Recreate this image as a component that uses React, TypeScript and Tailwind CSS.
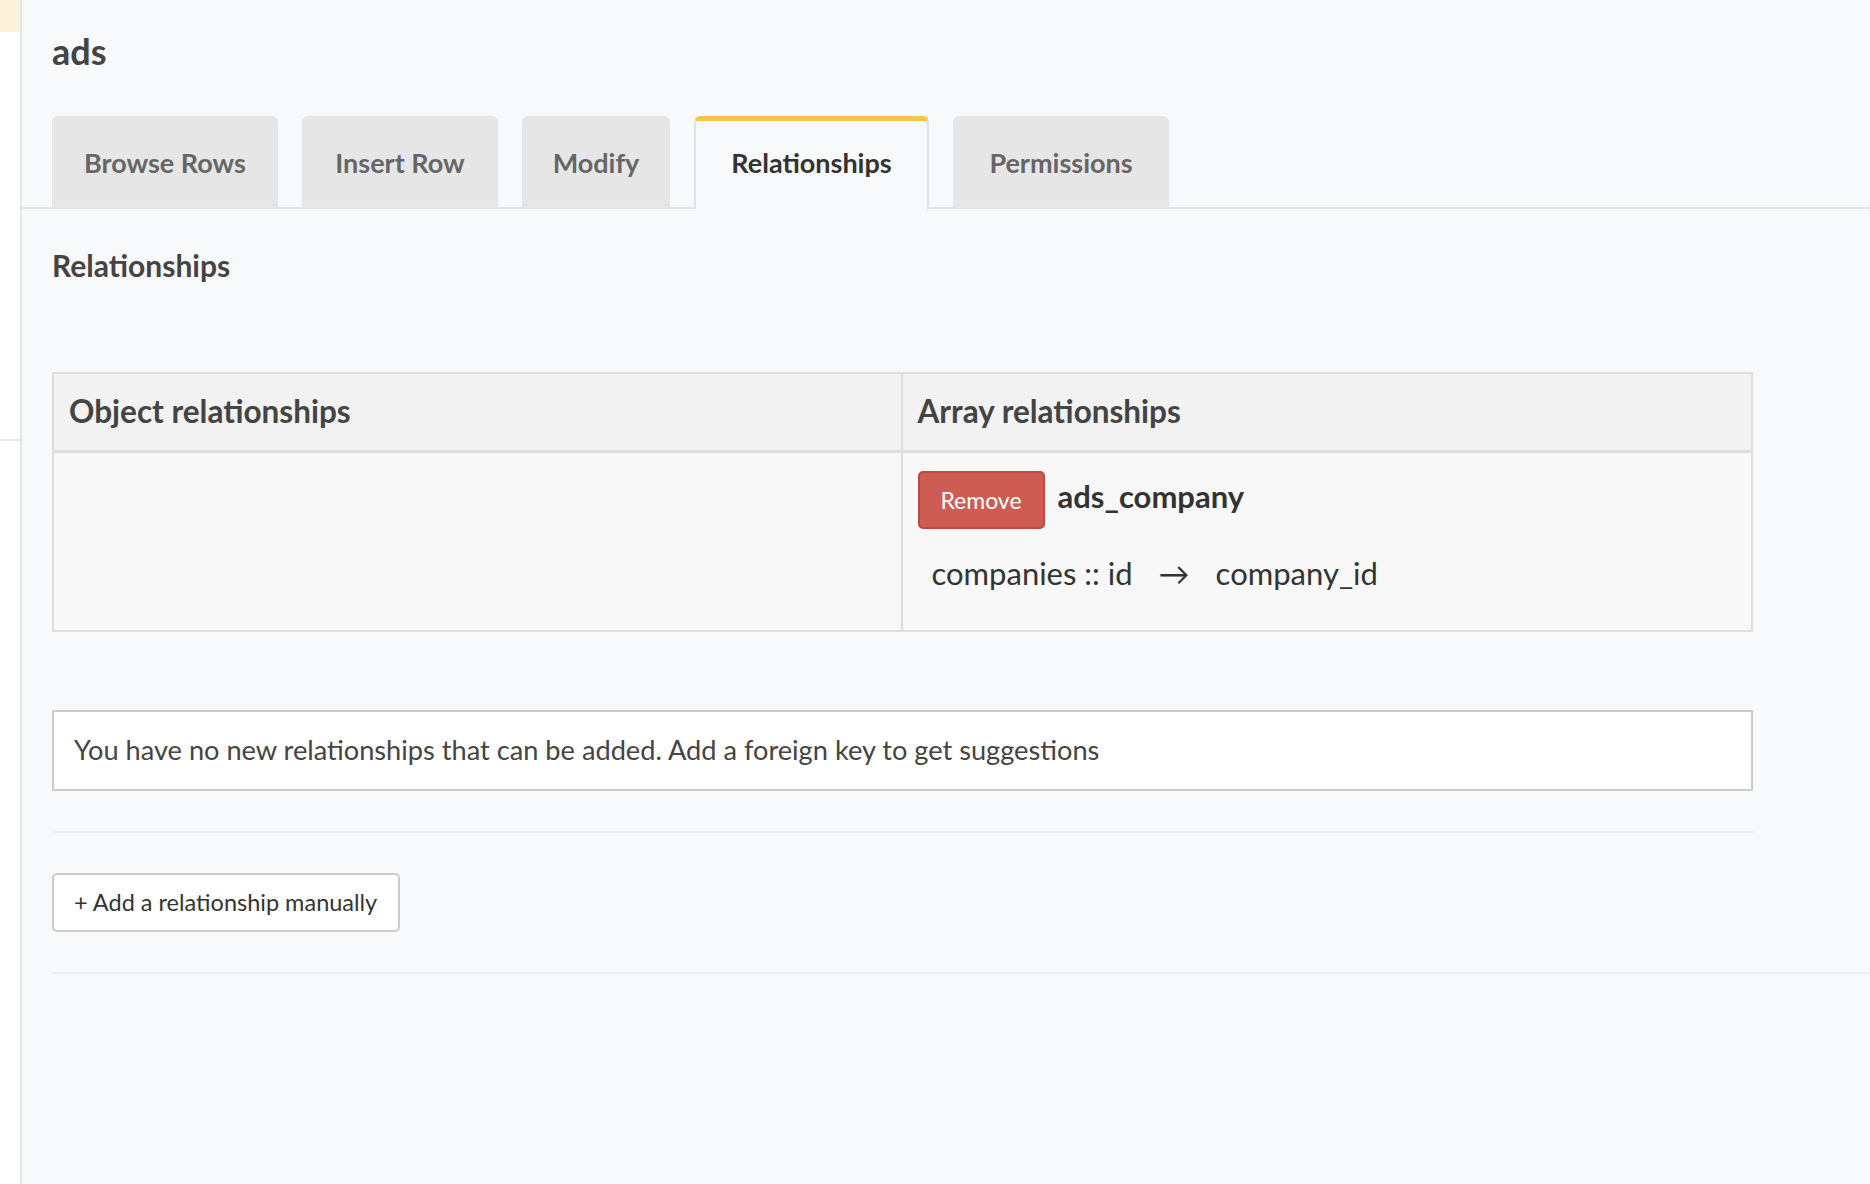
import React from "react";

const tabs = [
  { label: "Browse Rows", width: "w-[226px]" },
  { label: "Insert Row", width: "w-[196px]" },
  { label: "Modify", width: "w-[148px]" },
  { label: "Relationships", width: "w-[235px]", active: true },
  { label: "Permissions", width: "w-[216px]" },
];

function TabBar() {
  return (
    <div className="mt-[43px] flex h-[93px] items-end gap-[24px] border-b-2 border-[#e3e4e6] pl-[30px]">
      {tabs.map((tab) =>
        tab.active ? (
          <div
            key={tab.label}
            className={`${tab.width} -mb-[2px] flex h-[93px] items-center justify-center rounded-t-[6px] border-x-2 border-t-[5px] border-x-[#e2e2e2] border-t-[#f8c548] bg-[#f8f9fa] pb-[4px] text-[27px] font-bold text-[#333]`}
          >
            {tab.label}
          </div>
        ) : (
          <div
            key={tab.label}
            className={`${tab.width} flex h-[91px] items-center justify-center rounded-t-[6px] bg-[#e6e6e6] pt-[3px] text-[27px] font-bold text-[#666]`}
          >
            {tab.label}
          </div>
        ),
      )}
    </div>
  );
}

function RelationshipsTable() {
  return (
    <div className="mt-[91px] w-[1701px] border-2 border-[#dddddd]">
      <div className="grid grid-cols-2 border-b-[3px] border-[#dddddd] bg-[#f2f2f2]">
        <div className="flex h-[76px] items-center border-r-2 border-[#dddddd] px-[15px] text-[31.5px] font-bold text-[#444]">
          Object relationships
        </div>
        <div className="flex h-[76px] items-center px-[15px] text-[31.5px] font-bold text-[#444]">
          Array relationships
        </div>
      </div>
      <div className="grid grid-cols-2 bg-[#f8f8f8]">
        <div className="h-[177px] border-r-2 border-[#dddddd]" />
        <div className="h-[177px] px-[15px] pt-[18px]">
          <div className="flex items-center gap-[13px]">
            <button className="h-[58px] w-[127px] rounded-[5px] border-2 border-[#c2493f] bg-[#cd5c54] text-[23px] text-white">
              Remove
            </button>
            <span className="pb-[8px] text-[31px] font-bold text-[#333]">
              ads_company
            </span>
          </div>
          <div className="mt-[27px] flex items-center pl-[14px] text-[31px] leading-[34px] text-[#333]">
            <span>companies :: id</span>
            <span className="ml-[26px]">→</span>
            <span className="ml-[26px]">company_id</span>
          </div>
        </div>
      </div>
    </div>
  );
}

export default function App() {
  return (
    <div className="flex min-h-[1184px] bg-[#f8f9fa] font-['Lato','Noto_Sans',sans-serif]">
      <aside className="flex w-[22px] shrink-0 flex-col border-r-2 border-[#e6e6e6] bg-white">
        <div className="h-[32px] bg-[#fdf3dc]" />
        <div className="h-[407px]" />
        <div className="border-t-2 border-[#e6e6e6]" />
      </aside>
      <main className="min-w-0 flex-1">
        <h2 className="pl-[30px] pt-[29px] text-[36px] font-bold leading-[44px] text-[#444]">
          ads
        </h2>
        <TabBar />
        <div className="pl-[30px]">
          <h3 className="mt-[40px] text-[30px] font-bold leading-[32px] text-[#444]">
            Relationships
          </h3>
          <RelationshipsTable />
          <div className="mt-[78px] flex h-[81px] w-[1701px] items-center border-2 border-[#cccccc] bg-white px-[20px] text-[27.2px] text-[#444]">
            You have no new relationships that can be added. Add a foreign key
            to get suggestions
          </div>
          <div className="mt-[40px] h-[2px] w-[1701px] bg-[#eceef0]" />
          <button className="mt-[40px] flex h-[59px] w-[348px] items-center rounded-[5px] border-2 border-[#cccccc] bg-white px-[20px] text-[23.5px] text-[#333]">
            + Add a relationship manually
          </button>
          <div className="mt-[40px] h-[2px] bg-[#eceef0]" />
        </div>
      </main>
    </div>
  );
}
